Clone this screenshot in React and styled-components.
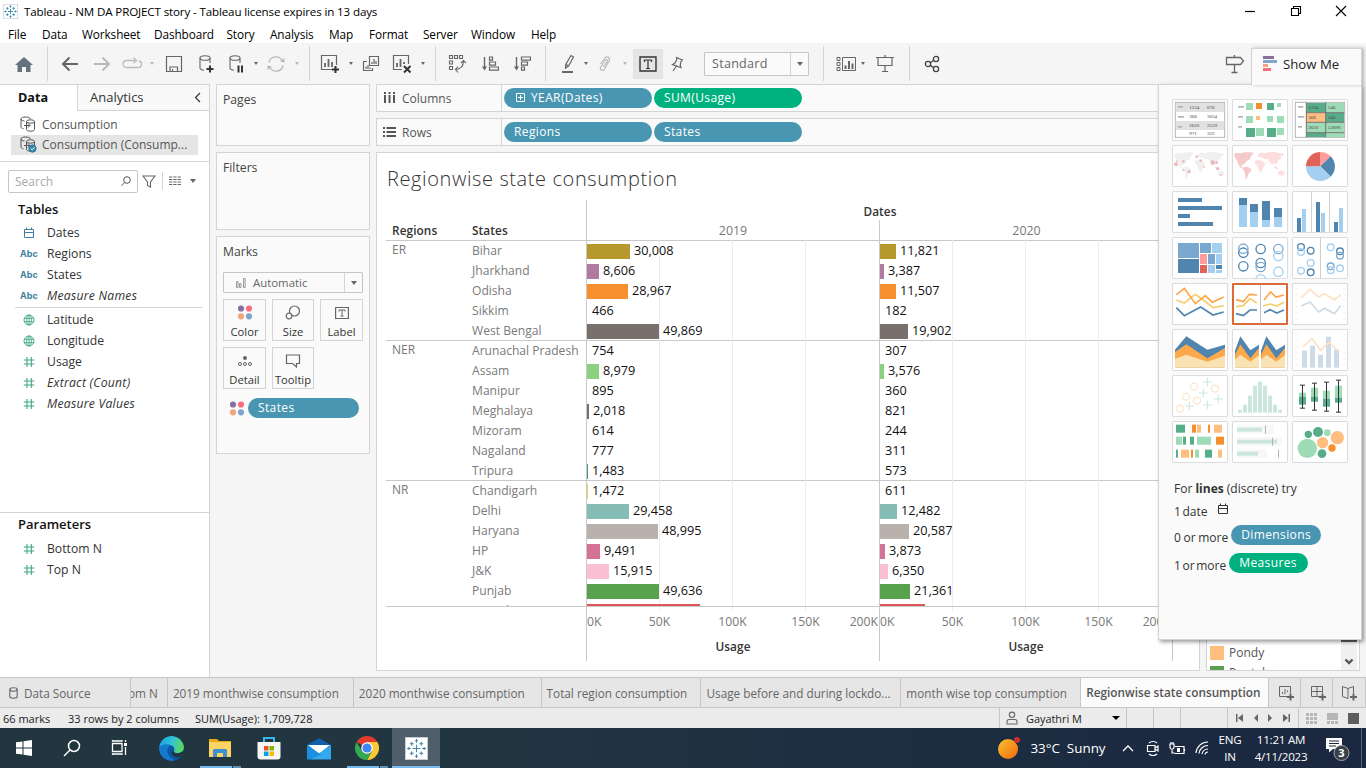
import React from "react";
import styled, { createGlobalStyle, css } from "styled-components";

const UI = '"Open Sans", "Noto Sans", sans-serif';
const BLUE = "#4996b2";
const GREEN = "#00b180";
const LINE = "#d4d4d4";

const GlobalStyle = createGlobalStyle`
  * { box-sizing: border-box; }
  body { margin: 0; overflow: hidden; font-family: ${UI}; font-size: 12px; color: #333; }
  svg { display: block; flex: none; }
`;

/* ---------- window chrome ---------- */
const Window = styled.div`
  position: relative;
  width: 1366px;
  height: 768px;
  display: flex;
  flex-direction: column;
  background: #f5f5f5;
  overflow: hidden;
  white-space: nowrap;
`;
const TitleBar = styled.header`
  height: 22px;
  display: flex;
  align-items: center;
  background: #fff;
  color: #000;
  padding-left: 3px;
  font-size: 11.6px;
  letter-spacing: -0.14px;
`;
const TitleText = styled.span`
  flex: 1;
  margin-left: 6px;
`;
const WindowButtons = styled.div`
  display: flex;
  width: 122px;
  justify-content: space-between;
  padding-right: 19px;
`;
const MenuBar = styled.nav`
  height: 21px;
  display: flex;
  background: #fff;
  color: #000;
  padding-left: 8px;
  font-size: 11.8px;
  line-height: 24px;
`;
const MenuItem = styled.span`
  width: ${(p) => p.$w}px;
  letter-spacing: -0.1px;
`;
const Toolbar = styled.div`
  height: 41px;
  display: flex;
  align-items: center;
  background: #f5f5f5;
  color: #666;
`;
const ToolGroup = styled.div`
  width: ${(p) => p.$w}px;
  height: 35px;
  padding-left: ${(p) => p.$pad || 0}px;
  display: flex;
  align-items: center;
  border-right: ${(p) => (p.$last ? 0 : 1)}px solid ${LINE};
`;
const Tool = styled.span`
  width: ${(p) => p.$w}px;
  height: 30px;
  display: flex;
  align-items: center;
  justify-content: center;
  color: ${(p) => (p.$off ? "#b9b9b9" : "#666")};
  ${(p) => p.$on && css`background: #e4e4e4; color: #333; margin-left: 2px;`}
`;
const Caret = styled.i`
  display: block;
  border: ${(p) => p.$s || 2.5}px solid transparent;
  border-top: ${(p) => (p.$s ? p.$s + 0.5 : 3)}px solid currentColor;
  border-bottom: 0;
`;
const Select = styled.div`
  display: flex;
  align-items: center;
  background: #fafafa;
  border: 1px solid #c6c6c6;
  border-radius: 1px;
  width: ${(p) => p.$w}px;
  height: ${(p) => p.$h}px;
  margin-left: ${(p) => p.$ml || 0}px;
  color: #666;
  & > span { flex: 1; padding-left: 7px; }
  & > b { width: 18px; height: 100%; display: flex; align-items: center; justify-content: center; border-left: 1px solid ${LINE}; }
`;
const StandardText = styled.span`
  font-size: 12.6px;
  letter-spacing: 0.25px;
`;
const ShowMeTab = styled.div`
  align-self: flex-end;
  width: 111px;
  height: 37px;
  margin-right: 4px;
  margin-bottom: -1px;
  padding-left: 11px;
  display: flex;
  align-items: center;
  gap: 6px;
  background: #fafafa;
  border: 1px solid ${LINE};
  border-bottom: 0;
  box-shadow: 2px 0 3px rgba(0, 0, 0, 0.25);
  position: relative;
  z-index: 3;
  color: #222;
  font-size: 13.2px;
  & > span { padding-bottom: 7px; }
  & > svg { margin-bottom: 6px; }
`;

/* ---------- workspace ---------- */
const Workspace = styled.main`
  height: 593px;
  display: flex;
`;
const DataPane = styled.aside`
  width: 210px;
  background: #fff;
  border-right: 1px solid ${LINE};
  border-top: 1px solid ${LINE};
`;
const PaneTabs = styled.div`
  display: flex;
  height: 26px;
  font-size: 13px;
  line-height: 25px;
`;
const DataTab = styled.div`
  width: 77px;
  padding-left: 18px;
  font-size: 12.6px;
  font-weight: 700;
  color: #111;
`;
const AnalyticsTab = styled.div`
  flex: 1;
  display: flex;
  align-items: center;
  justify-content: space-between;
  padding: 0 7px 0 12px;
  background: #f9f9f9;
  border-left: 1px solid ${LINE};
  border-bottom: 1px solid ${LINE};
`;
const Sources = styled.div`
  height: 51px;
  padding: 4px 11px 0;
  border-bottom: 1px solid ${LINE};
`;
const Source = styled.div`
  height: 20px;
  padding: 0 0 1px 9px;
  display: flex;
  align-items: center;
  gap: 5px;
  font-size: 12px;
  color: #555;
  background: ${(p) => (p.$on ? "#e5e5e5" : "none")};
`;
const SearchRow = styled.div`
  display: flex;
  align-items: center;
  padding: 8px 0 0 8px;
  height: 30px;
  margin-bottom: 5px;
  color: #666;
`;
const SearchBox = styled.div`
  width: 130px;
  height: 23px;
  display: flex;
  align-items: center;
  justify-content: space-between;
  padding: 0 6px;
  border: 1px solid #c6c6c6;
  border-radius: 2px;
  font-size: 12px;
  color: #aaa;
  margin-right: 4px;
`;
const ColumnsToggle = styled.div`
  margin-left: 6px;
  padding-left: 6px;
  height: 18px;
  display: flex;
  align-items: center;
  gap: 9px;
  border-left: 1px solid ${LINE};
`;
const PaneHeading = styled.h3`
  margin: 0;
  height: 25px;
  line-height: ${(p) => p.$lh || 24}px;
  padding-left: 18px;
  font-size: 13px;
  font-weight: 600;
  color: #111;
`;
const Field = styled.div`
  height: 21px;
  display: grid;
  grid-template-columns: 18px 1fr;
  column-gap: 9px;
  align-items: center;
  padding-left: 20px;
  font-size: 12.2px;
  font-style: ${(p) => (p.$italic ? "italic" : "normal")};
  letter-spacing: ${(p) => (p.$italic ? 0.25 : 0)}px;
  color: #333;
  & > svg { justify-self: center; }
`;
const Abc = styled.b`
  font: 700 9px "Inter", sans-serif;
  letter-spacing: 0;
  color: #3f7f9c;
`;
const FieldRule = styled.hr`
  margin: 1px 7px 1px 15px;
  border: 0;
  border-top: 1px solid ${LINE};
`;
const Parameters = styled.section`
  margin-top: 98px;
  border-top: 1px solid ${LINE};
`;

const CardColumn = styled.section`
  width: 154px;
  margin-left: 6px;
  display: flex;
  flex-direction: column;
  gap: 6px;
`;
const Card = styled.div`
  height: ${(p) => p.$h}px;
  background: #fafafa;
  border: 1px solid ${LINE};
  padding: 6px 6px 0;
  font-size: 12.2px;
  line-height: 18px;
  color: #444;
`;
const AutoSelect = styled(Select)`
  margin-top: 11px;
  font-size: 11.4px;
  & > svg { margin-left: 12px; }
`;
const MarkGrid = styled.div`
  display: grid;
  grid-template-columns: 43px 42px 43px;
  grid-auto-rows: 42px;
  gap: 6px;
  margin-top: 6px;
`;
const MarkButton = styled.div`
  display: flex;
  flex-direction: column;
  align-items: center;
  border: 1px solid ${LINE};
  padding-top: 5px;
  color: #333;
  font-size: 11.2px;
  & > span { margin-top: 3px; }
  & > svg { color: #666; }
`;
const MarkShelf = styled.div`
  display: flex;
  align-items: center;
  gap: 3px;
  margin-top: 9px;
  padding-left: 6px;
`;
const Pill = styled.span`
  display: flex;
  align-items: center;
  gap: 6px;
  width: ${(p) => p.$w}px;
  height: 20px;
  padding: 0 0 1px ${(p) => p.$pad || 10}px;
  border-radius: 10px;
  background: ${(p) => (p.$measure ? GREEN : BLUE)};
  color: #fff;
  font-size: 12px;
  font-weight: 500;
  letter-spacing: 0.38px;
`;

const Center = styled.section`
  width: 824px;
  margin-left: 6px;
  display: flex;
  flex-direction: column;
  gap: 6px;
`;
const Shelf = styled.div`
  height: 28px;
  display: flex;
  align-items: center;
  gap: 2px;
  background: #fafafa;
  border: 1px solid ${LINE};
`;
const ShelfLabel = styled.div`
  width: 125px;
  height: 100%;
  padding-left: 6px;
  display: flex;
  align-items: center;
  gap: 6px;
  border-right: 1px solid ${LINE};
  color: #555;
  font-size: 12px;
`;
const Sheet = styled.div`
  height: 519px;
  background: #fff;
  border: 1px solid ${LINE};
  padding: 0 0 0 9px;
`;
const SheetTitle = styled.h2`
  margin: 0;
  height: 47px;
  padding: 0 0 0 1px;
  line-height: 51px;
  font-size: 20px;
  font-weight: 300;
  letter-spacing: 0.6px;
  color: #333;
`;

/* ---------- chart ---------- */
const AXIS = "#c9c9c9";
const Cols = styled.div`
  display: grid;
  grid-template-columns: 86px 114px 293px 294px;
  width: 787px;
`;
const ChartHead = styled(Cols)`
  height: 40px;
  grid-template-rows: 20px 20px;
  line-height: 21px;
`;
const HeadLabel = styled.b`
  grid-row: 2;
  grid-column: ${(p) => p.$col};
  padding-left: ${(p) => (p.$col === 1 ? 6 : 0)}px;
  font-weight: 600;
  font-size: 11.8px;
  letter-spacing: 0.1px;
`;
const HeadDates = styled(HeadLabel)`
  grid-row: 1;
  grid-column: 3 / 5;
  text-align: center;
  border-left: 1px solid ${AXIS};
  line-height: 22px;
`;
const Year = styled.span`
  grid-row: 2;
  grid-column: ${(p) => p.$col};
  border-left: 1px solid ${AXIS};
  text-align: center;
  color: #787878;
  font-size: 12.4px;
`;
const Viewport = styled.div`
  height: 366px;
  width: 787px;
  overflow: hidden;
`;
const Region = styled.div`
  display: grid;
  grid-template-columns: 86px 701px;
  box-shadow: inset 0 1px ${AXIS};
`;
const RegionName = styled.span`
  padding-left: 6px;
  line-height: 20px;
  color: #787878;
  font-size: 12px;
`;
const StateRow = styled.div`
  display: grid;
  grid-template-columns: 114px 293px 294px;
  height: 20px;
  line-height: 21px;
  color: #7a7a7a;
  font-size: 12.1px;
`;
const grid = css`
  background-image: linear-gradient(#ededed, #ededed), linear-gradient(#ededed, #ededed), linear-gradient(#ededed, #ededed);
  background-size: 1px 100%;
  background-repeat: no-repeat;
  background-position: 72px 0, 145px 0, 218px 0;
`;
const Plot = styled.div`
  ${grid}
  border-left: 1px solid ${AXIS};
  border-right: ${(p) => (p.$last ? 1 : 0)}px solid ${AXIS};
  display: flex;
  align-items: center;
  gap: 4px;
  color: #111;
  font-size: 12.7px;
`;
const Bar = styled.i`
  height: 15px;
  margin-top: 1px;
  background: ${(p) => p.$c};
`;
const AxisRow = styled(Cols)`
  height: 55px;
  & > i { grid-column: 1 / 3; border-top: 1px solid ${AXIS}; }
`;
const Axis = styled.div`
  border-left: 1px solid ${AXIS};
  border-top: 1px solid ${AXIS};
  border-right: ${(p) => (p.$last ? 1 : 0)}px solid ${AXIS};
  ${grid}
  background-size: 1px 4px;
  text-align: center;
  & > b { display: block; font-weight: 600; font-size: 11.8px; margin-top: 8px; letter-spacing: 0.1px; }
`;
const Ticks = styled.div`
  display: grid;
  grid-template-columns: 36px 73px 73px 73px 36px;
  padding-top: 6px;
  font-size: 12.2px;
  line-height: 17px;
  color: #787878;
  & > :first-child { text-align: left; }
  & > :last-child { justify-self: end; }
`;

const Legend = styled.aside`
  width: 154px;
  height: 587px;
  margin-left: 6px;
  display: flex;
  justify-content: space-between;
  align-items: flex-end;
  background: #fff;
  border: 1px solid ${LINE};
  padding: 0 2px 0 3px;
  overflow: hidden;
`;
const LegendRows = styled.div`
  height: 28px;
  overflow: hidden;
`;
const LegendRow = styled.div`
  height: 20px;
  display: flex;
  align-items: center;
  gap: 5px;
  color: #555;
  font-size: 12px;
  &::before { content: ""; width: 14px; height: 14px; margin-top: 2px; background: ${(p) => p.$c}; }
`;
const LegendScroll = styled.div`
  width: 16px;
  height: 100%;
  display: flex;
  flex-direction: column;
  align-items: center;
  background: #f0f0f0;
  &::before { content: ""; width: 100%; height: 557px; background: #5a5a5a; margin-bottom: 16px; }
`;

/* ---------- show me ---------- */
const ShowMe = styled.aside`
  position: absolute;
  left: 1158px;
  top: 84px;
  width: 204px;
  height: 556px;
  z-index: 2;
  background: #fafafa;
  border: 1px solid ${LINE};
  box-shadow: 2px 2px 4px rgba(0, 0, 0, 0.4);
  padding: 14px 0 0 13px;
  color: #333;
`;
const Thumbs = styled.div`
  display: grid;
  grid-template-columns: repeat(3, 56px);
  grid-auto-rows: 42px;
  gap: 4px;
  margin-bottom: 16px;
`;
const Thumb = styled.div`
  background: #fff;
  border: ${(p) => (p.$on ? "2px solid #dc6a36" : "1px solid #dcdcdc")};
  border-radius: 1px;
  & > svg { margin: ${(p) => (p.$on ? -2 : -1)}px; }
`;
const Hint = styled.div`
  height: ${(p) => p.$h}px;
  padding-left: 2px;
  display: flex;
  align-items: center;
  gap: 3px;
  font-size: 12px;
  word-spacing: ${(p) => p.$ws || 0}px;
  & > svg { margin: 0 0 5px 6px; }
  & > ${Pill} { margin-bottom: 4px; }
`;

/* ---------- bottom bars ---------- */
const Tabs = styled.div`
  height: 31px;
  display: flex;
  background: #e6e6e6;
  border-top: 1px solid #c6c6c6;
  border-bottom: 1px solid #c6c6c6;
  color: #666;
`;
const SheetTab = styled.div`
  width: ${(p) => p.$w}px;
  display: flex;
  align-items: center;
  justify-content: ${(p) => (p.$clip ? "flex-end" : "flex-start")};
  gap: 6px;
  padding: 1px ${(p) => (p.$clip ? 9 : 0)}px 0 ${(p) => p.$pad ?? 5}px;
  border-right: 1px solid #c6c6c6;
  overflow: hidden;
  font-size: 11.75px;
  ${(p) => p.$on && css`background: #fbfbfb; font-weight: 600; font-size: 11.8px; color: #555; padding-bottom: 2px;`}
`;
const StatusBar = styled.footer`
  height: 20px;
  display: flex;
  align-items: center;
  background: #ebebeb;
  padding-left: 3px;
  color: #222;
  font-size: 11px;
`;
const Stat = styled.span`
  width: ${(p) => p.$w}px;
`;
const StatusCell = styled.div`
  width: ${(p) => p.$w}px;
  height: 100%;
  display: flex;
  align-items: center;
  justify-content: space-between;
  padding: 0 ${(p) => p.$pad || 0}px;
  border-left: 1px solid #c6c6c6;
  color: #666;
  & > em { flex: 1; font-style: normal; color: #222; padding-left: 8px; font-size: 10.9px; }
  & > ${Caret} { color: #000; }
`;
const Taskbar = styled.footer`
  height: 40px;
  display: flex;
  background: linear-gradient(90deg, #22363f 0%, #213641 35%, #1c2e41 65%, #1b2740 100%);
  color: #fff;
`;
const TaskItem = styled.div`
  width: ${(p) => p.$w}px;
  display: flex;
  align-items: center;
  justify-content: center;
  ${(p) => p.$on && css`background: #4e5f69; box-shadow: inset 0 -2px #76b9ed;`}
  ${(p) => p.$stack && css`
    background: linear-gradient(#76b9ed, #76b9ed) ${p.$stack}px 100% / 32px 2px no-repeat,
      linear-gradient(#5a8fb8, #5a8fb8) ${p.$stack + 33}px 100% / 8px 2px no-repeat;
  `}
`;
const Tray = styled.div`
  margin-left: auto;
  display: flex;
  align-items: center;
`;
const TrayItem = styled.div`
  width: ${(p) => p.$w}px;
  display: flex;
  align-items: center;
  justify-content: center;
  text-align: center;
  font-size: ${(p) => p.$fs || 13.4}px;
  line-height: 17px;
  letter-spacing: ${(p) => p.$ls || 0}px;
`;
const Notifications = styled(TrayItem)`
  height: 40px;
  margin-right: 4px;
  border-right: 1px solid #5a6576;
  padding-right: 2px;
`;

/* ---------- icons ---------- */
const Svg = ({ w = 18, h = w, vb, children, ...rest }) => (
  <svg width={w} height={h} viewBox={vb || `0 0 ${w} ${h}`} fill="none" stroke="currentColor" {...rest}>{children}</svg>
);
const TableauMark = ({ s, c = "#3f86a8", sw = 1.4 }) => (
  <Svg w={s} vb="0 0 24 24" stroke={c} strokeWidth={sw}>
    <rect x=".5" y=".5" width="23" height="23" fill="#fff" stroke="#c8cdd0" strokeWidth="1" />
    <path d="M12 8v8M8 12h8M12 2v4M10.500 4h3M12 18v4M10.500 20h3M2 12h4M4 10.500v3M18 12h4M20 10.500v3M7 5v4M5 7h4M17 5v4M15 7h4M7 15v4M5 17h4M17 15v4M15 17h4" />
  </Svg>
);
const Cylinder = ({ children }) => (
  <Svg w={18} h={20} strokeWidth="1.1">
    <ellipse cx="8" cy="4" rx="5" ry="2.300" />
    <path d="M3 4v10c0 1.300 2 2 4 2.200M13 4v5" />
    {children}
  </Svg>
);
const Plus = ({ x, y }) => <path d={`M${x - 3.5} ${y}h7M${x} ${y - 3.5}v7`} stroke="#333" strokeWidth="2" />;
const Dots = () => (
  <Svg w={16} h={15} stroke="none">
    <circle cx="4" cy="3.500" r="3.100" fill="#86709b" /><circle cx="12" cy="3.500" r="3.100" fill="#f96d7c" />
    <circle cx="4" cy="11.300" r="3.100" fill="#f2a57c" /><circle cx="12" cy="11.300" r="3.100" fill="#82a5cd" />
  </Svg>
);
const Person = () => <Svg w={12} h={14} strokeWidth="1.100"><circle cx="6" cy="3.800" r="2.700" /><path d="M1 13V11c0-2 1-2.500 2-2.500h6c1 0 2 .5 2 2.500v2z" /></Svg>;
const Calendar = ({ c = "currentColor" }) => (
  <Svg w={12} h={12} stroke={c}><path d="M1.500 2.500h9v8h-9zM1.500 5.500h9M3.500 .5v2.500M8.500 .5v2.500" /></Svg>
);
const Globe = () => (
  <Svg w={12} stroke="#3fa882" strokeWidth=".9"><circle cx="6" cy="6" r="5" /><ellipse cx="6" cy="6" rx="2.300" ry="5" /><path d="M1 4.300h10M1 7.700h10M6 1v10" /></Svg>
);
const Hash = () => <Svg w={12} stroke="#3fa882" strokeWidth="1.100"><path d="M4 1v10M8.300 1v10M.8 4h10.500M.8 8h10.500" /></Svg>;
const DataIcon = ({ on }) => (
  <Svg w={17} h={17} strokeWidth="1">
    <path d="M10.500 3C10 1.500 8 1 5.500 1S1 1.800 1 3v8c0 .8 1 1.500 2.500 1.800M1 3c0 1.300 2 1.900 3.500 2" />
    <ellipse cx="10.500" cy="5.500" rx="4" ry="1.700" /><path d="M6.500 5.500v8c0 .9 1.800 1.700 4 1.700s4-.8 4-1.700v-8M4 9.500h6M8 7.500l2 2-2 2" />
    {on && <><circle cx="12.500" cy="12.500" r="3.700" fill="#3381a3" stroke="#3381a3" /><path d="M10.700 12.500l1.400 1.400 2.400-2.700" stroke="#fff" /></>}
  </Svg>
);
const NavArrow = ({ left }) => <Svg w={18} strokeWidth="2"><path d={left ? "M17 9H2M8.500 2.500L2 9l6.500 6.500" : "M1 9h15M9.500 2.500L16 9l-6.500 6.500"} /></Svg>;
const SheetPlus = () => (
  <Svg w={20} h={20}><path d="M12 15.500H1.500V1.500h15V11" strokeWidth="1.200" /><path d="M5 13V9M8.500 13V5M12 13V8" strokeWidth="1.800" /><Plus x={15.500} y={15.500} /></Svg>
);
const SortIcon = ({ desc }) => (
  <Svg w={18} h={18}>
    <path d="M3.500 2v11" strokeWidth="1.400" /><path d="M1 11.500h5L3.500 15.500z" fill="currentColor" stroke="none" />
    <path d={desc ? "M8.500 2h9v3.200h-9zM8.500 7h6v3.200h-6zM8.500 12h3v3.200h-3z" : "M8.500 2h3v3.200h-3zM8.500 7h6v3.200h-6zM8.500 12h9v3.200h-9z"} strokeWidth="1.200" />
  </Svg>
);

/* ---------- show me thumbnails ---------- */
const R = ({ f, b }) => b.map(([x, y, w, h], i) => <rect key={i} x={x} y={y} width={w} height={h} fill={f} />);
const O = ({ s, c, r = 10, sw = 3 }) => c.map(([x, y], i) => <circle key={i} cx={x} cy={y} r={r} stroke={s} strokeWidth={sw} />);
const L = ({ s, p, w = 3 }) => <polyline points={p} stroke={s} strokeWidth={w} />;
const TableText = ({ rows }) => rows.map(([x, y, t]) => (
  <text key={`${x}-${y}`} x={x} y={y} fontSize="15" fontFamily="Liberation Serif" fill="#444" stroke="none" textLength={t.length * 7.500}>{t}</text>
));
const WorldMap = ({ a, b }) => (
  <g stroke="none">
    <path fill={a} d="M6 28l6-4 12 1 14-3 18 0 10 2-6 6-6 8 2 4-8 4-6 4-4 7-8 3-2 5 8 5-2 2-9-4-7-12-3-10-6-6zM36 66l10-1 12 7-2 8-7 8-5 14h-3l-2-18-5-9z" />
    <path fill={b} d="M76 34l4-8 8-4 10 3 14-4 14-1 14 4 18 3-4 5-8 2 2 7-8 3-4 9-6 6-4-7-5 9-6-10-8-2-9 6 9-3 5-6-5-5-7 2zM68 48l13-4 11 5 8 7-5 9-4 11-6 7-6-10-3-11-7-6zM138 80l11-5 9 8-5 9-14-3zM128 62l12 8-4 3-10-5z" />
  </g>
);
const blueA = "#4f85ae", blueB = "#a5cfef", gA = "#57ad89", gB = "#9edcb8", oA = "#f48f2d", oB = "#ffbd80";
const art = [
  ["96 297 168 126", <>
    <rect x="106" y="307" width="148" height="105" stroke="#b4b4b4" strokeWidth="3" />
    <R f="#e1e1e1" b={[[107, 309, 146, 27], [107, 363, 146, 27]]} />
    <R f="#b4b4b4" b={[[114, 318, 15, 5], [114, 348, 18, 5], [114, 378, 13, 5]]} />
    <TableText rows={[[148, 327, "1234"], [201, 327, "678"], [148, 355, "368"], [201, 355, "3034"], [148, 382, "2620"], [201, 382, "2559"], [148, 406, "971"], [201, 406, "322"]]} />
  </>],
  ["276 297 168 126", <>
    <R f="#b4b4b4" b={[[294, 318, 18, 5], [294, 348, 15, 5], [294, 378, 12, 5]]} />
    <R f={gB} b={[[318, 309, 21, 21], [411, 309, 12, 12], [318, 348, 21, 21], [381, 348, 18, 18], [411, 348, 21, 21], [348, 384, 24, 24], [411, 384, 21, 21]]} />
    <R f={gA} b={[[381, 309, 21, 21], [318, 384, 27, 27], [381, 384, 27, 27]]} />
    <R f={oA} b={[[348, 309, 18, 18]]} /><R f={oB} b={[[348, 348, 12, 12]]} />
  </>],
  ["456 297 168 126", <>
    <rect x="466" y="307" width="148" height="105" stroke="#b4b4b4" strokeWidth="3" />
    <R f="#b4b4b4" b={[[474, 318, 16, 5], [474, 348, 19, 5], [474, 378, 12, 5]]} />
    <R f={gA} b={[[500, 309, 56, 27], [558, 339, 54, 27], [500, 399, 56, 12]]} />
    <R f={gB} b={[[558, 309, 54, 27], [500, 369, 56, 27], [558, 369, 54, 27], [558, 399, 54, 12]]} />
    <R f={oB} b={[[500, 339, 56, 27]]} />
    <path d="M499 307v105M557 307v105M499 338h114M499 367h114M499 398h114" stroke="#6d6d6d" strokeWidth="3" />
    <TableText rows={[[505, 327, "1234"], [564, 327, "546"], [505, 358, "368"], [564, 358, "340"], [505, 388, "2620"], [564, 388, "53890"]]} />
  </>],
  ["0 0 168 126", <><WorldMap a="#f0f0f0" b="#f0f0f0" />
    <g stroke="none" fill="#e8b0b3" opacity=".85"><circle cx="12" cy="58" r="6" /><circle cx="34" cy="49" r="4" /><circle cx="14" cy="49" r="3" /><circle cx="74" cy="35" r="4" /><circle cx="86" cy="47" r="4" /><circle cx="96" cy="65" r="3" /><circle cx="122" cy="53" r="7" /><circle cx="134" cy="53" r="4" /><circle cx="137" cy="71" r="5" /><circle cx="51" cy="80" r="5" /><circle cx="34" cy="75" r="3" /><circle cx="146" cy="90" r="3" /></g></>],
  ["0 0 168 126", <WorldMap a="#f6caca" b="#fddede" />],
  ["456 435 168 126", <g stroke="none">
    <path d="M541 499V456A43 43 0 0 1 572 469z" fill="#ff9d9c" /><path d="M541 499L572 469A43 43 0 0 1 572 530z" fill={blueA} />
    <path d="M541 499L572 530A43 43 0 0 1 498 499z" fill={blueB} /><path d="M541 499H498A43 43 0 0 1 541 456z" fill="#e16257" /></g>],
  ["96 573 168 126", <R f={blueA} b={[[114, 594, 72, 12], [114, 618, 132, 12], [114, 642, 36, 12], [114, 666, 105, 12]]} />],
  ["276 573 168 126", <><R f={blueA} b={[[297, 594, 24, 21], [330, 612, 24, 24], [366, 603, 24, 57], [402, 624, 24, 27]]} /><R f={blueB} b={[[297, 615, 24, 66], [330, 636, 24, 45], [366, 660, 24, 21], [402, 651, 24, 30]]} /></>],
  ["456 573 168 126", <><R f="#d0d0d0" b={[[513, 574, 3, 123], [567, 574, 3, 123]]} /><R f={blueA} b={[[471, 654, 12, 42], [528, 606, 12, 90], [582, 666, 12, 30]]} /><R f={blueB} b={[[486, 627, 12, 69], [543, 639, 12, 57], [597, 624, 12, 72]]} /></>],
  ["36 -9 168 126", <><R f="#7aa9cf" b={[[54, 9, 63, 45], [120, 9, 33, 30], [144, 42, 21, 30]]} /><R f={blueA} b={[[54, 57, 63, 42], [168, 75, 18, 12]]} /><R f={blueB} b={[[156, 9, 30, 30], [168, 42, 18, 30], [144, 75, 21, 24], [168, 90, 18, 9]]} /><R f="#ff9d9c" b={[[120, 42, 21, 30]]} /><R f="#e16257" b={[[120, 75, 21, 24]]} /></>],
  ["216 -9 168 126", <><O r="14" sw={4} s={blueA} c={[[250, 38], [250, 79], [302, 27], [302, 69]]} /><O r="14" sw={4} s="#7aa9cf" c={[[250, 26], [302, 81], [355, 27]]} /><O r="14" sw={4} s={blueB} c={[[355, 48], [355, 95], [302, 118]]} /></>],
  ["396 -9 168 126", <><R f="#d0d0d0" b={[[480, -8, 3, 123]]} /><O sw={4} s={blueA} c={[[423, 21], [452, 32], [452, 97], [540, 34]]} /><O sw={4} s="#7aa9cf" c={[[540, 47], [512, 79]]} /><O sw={4} s={blueB} c={[[423, 36], [452, 69], [423, 92], [512, 22], [512, 91], [540, 85]]} /></>],
  ["36 130 168 126", <><L s="#f5ce6d" p="49,181 73,190 106,164 134,184 159,204 191,198" w="5" /><L s="#ffa347" p="49,165 73,146 106,192 136,168 157,188 191,172" w="5" /><L s={blueA} p="49,204 73,228 122,202 159,226 191,217" w="5" /></>],
  ["216 130 168 126", <><R f="#c4c4c4" b={[[300, 135, 3, 117]]} /><L s="#f5ce6d" p="228,201 250,198 270,177 290,190" w="5" /><L s="#f5ce6d" p="309,199 330,193 350,199 372,188" w="5" /><L s="#ffa347" p="228,180 250,186 268,164 291,166" w="5" /><L s="#ffa347" p="312,181 332,157 348,172 372,166" w="5" /><L s={blueA} p="228,222 250,228 270,211 291,211" w="5" /><L s={blueA} p="312,219 330,210 350,220 372,211" w="5" /></>],
  ["396 130 168 126", <><L s="#fde1c3" p="424,174 450,149 476,172 494,162 523,181 542,165" w="5" /><L s="#cddae7" p="424,199 450,187 476,217 494,206 523,222 542,198" w="5" /><path d="M409 145v92M553 145v92" stroke="#ebebeb" strokeWidth="9" strokeDasharray="2 16" /></>],
  ["36 268 168 126", <g stroke="none"><path fill={blueA} d="M45 330L79 290 142 330 195 315V384H45z" /><path fill="#fca94b" d="M45 337L79 314 142 356 195 325V384H45z" /><path fill="#f9e2b4" d="M45 358L79 345 142 366 195 348V384H45z" /></g>],
  ["216 268 168 126", <g stroke="none">{[0, 78].map((d) => <g key={d} transform={`translate(${d} 0)`}><path fill={blueA} d="M225 333L241 290 271 332 297 315V384H225z" /><path fill="#fca94b" d="M225 345L241 314 271 356 297 325V384H225z" /><path fill="#f9e2b4" d="M225 360L241 345 271 366 297 347V384H225z" /></g>)}</g>],
  ["396 268 168 126", <><R f="#cddae7" b={[[426, 333, 15, 51], [450, 318, 15, 66], [474, 345, 15, 39], [498, 291, 15, 93], [522, 330, 15, 54]]} /><L s="#fde1c3" p="429,322 456,297 482,332 507,308 534,334" w="5" /><path d="M409 283v92M553 283v92" stroke="#ebebeb" strokeWidth="9" strokeDasharray="2 16" /></>],
  ["36 406 168 126", <><O s="#fde1c3" r="11" c={[[102, 441], [78, 471], [111, 483], [60, 507], [165, 447]]} />{[[142, 427], [130, 460], [88, 499], [142, 496], [175, 478]].map(([x, y]) => <path key={x + y} d={`M${x - 13} ${y}h26M${x} ${y - 13}v26`} stroke="#cbe6dc" strokeWidth="3" />)}</>],
  ["216 406 168 126", <R f="#cbe6dc" b={[[234, 510, 12, 9], [249, 495, 12, 24], [264, 468, 12, 51], [279, 438, 12, 81], [294, 426, 12, 93], [309, 438, 12, 81], [324, 468, 12, 51], [339, 495, 12, 24], [354, 510, 12, 9]]} />],
  ["396 406 168 126", <><R f={gB} b={[[417, 459, 21, 12], [453, 444, 21, 27], [489, 453, 21, 24], [525, 438, 21, 36]]} /><R f={gA} b={[[417, 471, 21, 24], [453, 471, 21, 15], [489, 477, 21, 24], [525, 474, 21, 15]]} /><path d="M427.500 436v70M420 436.500h15M420 505.500h15M463.500 431v81M456 430.500h15M456 511.500h15M499.500 428v87M492 427.500h15M492 514.500h15M535.500 422v96M528 421.500h15M528 517.500h15" stroke="#333" strokeWidth="3" /></>],
  ["36 544 168 126", <><R f={gA} b={[[48, 555, 27, 24], [69, 591, 9, 24], [90, 591, 12, 24], [48, 630, 6, 24], [135, 630, 21, 24]]} /><R f={oA} b={[[96, 555, 12, 24], [144, 555, 6, 24], [168, 591, 24, 24], [93, 630, 6, 24]]} /><R f={oB} b={[[111, 555, 12, 24], [162, 555, 24, 24], [63, 630, 24, 24], [174, 630, 12, 24]]} /><R f={gB} b={[[48, 591, 18, 24], [111, 591, 42, 24], [105, 630, 12, 24]]} /></>],
  ["216 544 168 126", <><R f="#f7f7f7" b={[[231, 557, 110, 26], [231, 593, 135, 26], [231, 629, 90, 26]]} /><R f="#cbe6dc" b={[[231, 564, 75, 12], [231, 600, 120, 12], [231, 636, 63, 12]]} /><R f="#b4b4b4" b={[[315, 558, 3, 24], [336, 594, 3, 24], [354, 630, 3, 24]]} /></>],
  ["396 544 168 126", <g stroke="none"><circle cx="442" cy="626" r="29" fill={gB} /><circle cx="445" cy="584" r="11" fill={gA} /><circle cx="474" cy="577" r="15" fill={gA} /><circle cx="502" cy="579" r="10" fill={gB} /><circle cx="532" cy="594" r="20" fill={oB} /><circle cx="488" cy="609" r="17" fill={oB} /><circle cx="516" cy="625" r="11" fill={oA} /><circle cx="486" cy="642" r="13" fill={gA} /></g>],
];

/* ---------- data ---------- */
const menus = [["File", 34], ["Data", 40], ["Worksheet", 72], ["Dashboard", 72.500], ["Story", 43.500], ["Analysis", 59], ["Map", 40], ["Format", 54], ["Server", 48], ["Window", 60], ["Help", 40]];
const regions = [
  ["ER", [["Bihar", "#b6992d", 30008, 11821], ["Jharkhand", "#b07aa1", 8606, 3387], ["Odisha", "#f5902c", 28967, 11507], ["Sikkim", "#d7b5a6", 466, 182], ["West Bengal", "#79706e", 49869, 19902]]],
  ["NER", [["Arunachal Pradesh", "#a0cbe8", 754, 307], ["Assam", "#8cd17d", 8979, 3576], ["Manipur", "#d4a6c8", 895, 360], ["Meghalaya", "#79706e", 2018, 821], ["Mizoram", "#fabfd2", 614, 244], ["Nagaland", "#d7b5a6", 777, 311], ["Tripura", "#499894", 1483, 573]]],
  ["NR", [["Chandigarh", "#f1ce63", 1472, 611], ["Delhi", "#86bcb6", 29458, 12482], ["Haryana", "#bab0ac", 48995, 20587], ["HP", "#d37295", 9491, 3873], ["J&K", "#fabfd2", 15915, 6350], ["Punjab", "#59a14f", 49636, 21361], ["Rajasthan", "#e15759", 77800, 31200, true]]],
];
const barWidth = (v) => Math.max(1, Math.floor((v * 292.8) / 200000 - 0.45));
const Value = ({ v, c, last, cut }) => (
  <Plot $last={last}>
    <Bar $c={v < 1000 ? "transparent" : c} style={{ width: barWidth(v) }} />
    {!cut && <span>{v.toLocaleString("en-US")}</span>}
  </Plot>
);
const fields = [["cal", "Dates"], ["abc", "Regions"], ["abc", "States"], ["abc", "Measure Names", 1], null, ["globe", "Latitude"], ["globe", "Longitude"], ["hash", "Usage"], ["hash", "Extract (Count)", 1], ["hash", "Measure Values", 1]];
const fieldIcon = { cal: <Calendar c="#3f7f9c" />, abc: <Abc>Abc</Abc>, globe: <Globe />, hash: <Hash /> };
const sheetTabs = [["2019 monthwise consumption", 186], ["2020 monthwise consumption", 188], ["Total region consumption", 160], ["Usage before and during lockdo...", 200], ["month wise top consumption", 180]];

const AxisPane = ({ last }) => (
  <Axis $last={last}>
    <Ticks><span>0K</span><span>50K</span><span>100K</span><span>150K</span><span>200K</span></Ticks>
    <b>Usage</b>
  </Axis>
);

const ToolbarRow = () => (
  <Toolbar>
    <ToolGroup $w={48}><Tool $w={47}><Svg w={18} h={18} stroke="none"><path fill="#66727f" d="M9 2l9 8h-2.500v7H11v-5H7v5H2.500v-7H0z" /></Svg></Tool></ToolGroup>
    <ToolGroup $w={262} $pad={6}>
      <Tool $w={32}><NavArrow left /></Tool>
      <Tool $w={32} $off><NavArrow /></Tool>
      <Tool $w={28} $off><Svg w={20} h={14} strokeWidth="1.300"><path d="M13 3.500H4.500a3.200 3.200 0 0 0 0 7H15.500a3.200 3.200 0 0 0 1.500-6.500M11.500 .8l3 2.700-3 2.700" /></Svg></Tool>
      <Tool $w={12} $off><Caret /></Tool>
      <Tool $w={32}><Svg w={18}><path d="M1.500 1.500h15v15h-15zM5 16.500V12h7.500v4.500M7.500 14v2.500" strokeWidth="1.200" /></Svg></Tool>
      <Tool $w={32}><Cylinder><Plus x={13} y={15} /></Cylinder></Tool>
      <Tool $w={28}><Cylinder><path d="M11.500 11.500v7M15 11.500v7" stroke="#333" strokeWidth="2" /></Cylinder></Tool>
      <Tool $w={12}><Caret /></Tool>
      <Tool $w={28} $off><Svg w={18}><path d="M2 7.500a7 7 0 0 1 13-2M16 10.500a7 7 0 0 1-13 2" strokeWidth="1.300" /><path d="M17.500 3v4.500l-4.500-1zM.5 15v-4.500l4.500 1z" fill="currentColor" stroke="none" /></Svg></Tool>
      <Tool $w={13} $off><Caret /></Tool>
    </ToolGroup>
    <ToolGroup $w={126} $pad={5}>
      <Tool $w={30}><SheetPlus /></Tool>
      <Tool $w={11}><Caret /></Tool>
      <Tool $w={30}><Svg w={18}><path d="M7.500 1.500h9v9h-9zM5 6.500H1.500v9h9V13" strokeWidth="1.200" /><path d="M10 9V7M12 9V4M14 9V6M4 14v-2.500M6 14v-4M8 14v-1.500" strokeWidth="1.200" /></Svg></Tool>
      <Tool $w={32}><Svg w={20} h={20}><path d="M10 15.500H1.500V1.500h15V10" strokeWidth="1.200" /><path d="M5 13V9M8.500 13V5M12 10V8" strokeWidth="1.800" /><path d="M12 12l6.500 6.500M18.500 12L12 18.500" stroke="#333" strokeWidth="2" /></Svg></Tool>
      <Tool $w={9}><Caret /></Tool>
    </ToolGroup>
    <ToolGroup $w={110} $pad={5}>
      <Tool $w={32}><Svg w={18} h={19} strokeWidth="1.100"><path d="M1.500 1.500h3v3h-3zM6.500 1.500h3v3h-3zM11.500 1.500h3v3h-3zM1.500 7h3v3h-3zM1.500 12.500h3v3h-3zM15.500 7c0 5-2 8-8 8.500M13 9l2.500-2.500L18 9M10 12.500L7.500 15.500l2.500 3" /></Svg></Tool>
      <Tool $w={33}><SortIcon /></Tool>
      <Tool $w={32}><SortIcon desc /></Tool>
    </ToolGroup>
    <ToolGroup $w={278} $pad={10}>
      <Tool $w={24}><Svg w={14} h={20}><path d="M10 1.500l2.500 1.500-5 9-3 2 .2-3.500zM5 10.500l2.500 1.500" strokeWidth="1.200" /><path d="M1 18h11" strokeWidth="2" /></Svg></Tool>
      <Tool $w={11}><Caret /></Tool>
      <Tool $w={28} $off><Svg w={14} h={18} strokeWidth="1.200"><path d="M2.500 9L7 3c1.500-2 5-1 4.500 2L6.500 14c-1.500 2.500-5 1-4-1.500L7 5.500c1-1.500 3-.5 2.300 1L5.500 12" /></Svg></Tool>
      <Tool $w={12} $off><Caret /></Tool>
      <Tool $w={30} $on><Svg w={18} h={16}><path d="M1 1h16v14H1z" strokeWidth="1.400" /><path d="M5.500 6V4h7v2M9 4v8.500M7 12.500h4" strokeWidth="1.200" /></Svg></Tool>
      <Tool $w={28}><Svg w={14} h={16} strokeWidth="1.200"><path d="M6.500 1.500l6 2.500-1.500 1.500-.8 3.500 .8 2.500-8.500-3 2.500-1.500 1.800-3.500zM6.500 10L3 15" /></Svg></Tool>
      <Select $w={105} $h={24} $ml={13}><StandardText>Standard</StandardText><b><Caret $s={3.5} /></b></Select>
    </ToolGroup>
    <ToolGroup $w={86} $pad={10}>
      <Tool $w={24}><Svg w={20} h={16}><path d="M1 1.500h3v3H1zM1 6.500h3v3H1zM1 11.500h3v3H1zM6.500 1.500h13v13h-13z" /><path d="M9.500 13V9.500M13 13V5M16.500 13V7.500" strokeWidth="2" /></Svg></Tool>
      <Tool $w={10}><Caret /></Tool>
      <Tool $w={34}><Svg w={18} h={18} strokeWidth="1.200"><path d="M0 2.500h18M2 2.500v8h14v-8M9 0v2.500M9 10.500V16M6 16.500h6" /></Svg></Tool>
    </ToolGroup>
    <ToolGroup $w={309} $pad={6} $last><Tool $w={32}><Svg w={16} h={18} stroke="#444" strokeWidth="1.300"><circle cx="4" cy="9" r="2.600" /><circle cx="12" cy="4" r="2.600" /><circle cx="12" cy="14" r="2.600" /><path d="M6.300 7.700l3.500-2.400M6.300 10.400l3.500 2.300" /></Svg></Tool></ToolGroup>
    <Tool $w={32}><Svg w={20} h={20}><path d="M1.500 3.500h14l3 3.500-3 3.500h-14zM9.500 1v2.500M9.500 10.500V18M6.500 18.500h6" strokeWidth="1.300" /></Svg></Tool>
    <ShowMeTab>
      <Svg w={14} h={16} stroke="none"><path fill="#86709b" d="M0 0h11v3H0z" /><path fill="#82a5cd" d="M0 4h14v3H0z" /><path fill="#f2a57c" d="M0 8h5v3H0z" /><path fill="#f96d7c" d="M0 12h8v3H0z" /></Svg>
      <span>Show Me</span>
    </ShowMeTab>
  </Toolbar>
);

const LeftPane = () => (
  <DataPane>
    <PaneTabs>
      <DataTab>Data</DataTab>
      <AnalyticsTab>Analytics<Svg w={8} h={11} strokeWidth="1.200"><path d="M6 1L1.500 5.500 6 10" /></Svg></AnalyticsTab>
    </PaneTabs>
    <Sources>
      <Source><DataIcon />Consumption</Source>
      <Source $on><DataIcon on />Consumption (Consump...</Source>
    </Sources>
    <SearchRow>
      <SearchBox>Search<Svg w={10} h={10} stroke="#555"><circle cx="6" cy="4" r="3.300" /><path d="M3.700 6.500L.5 9.700" /></Svg></SearchBox>
      <Svg w={14} h={13} strokeWidth="1.100"><path d="M1 1h12L8.500 7v5L5.500 10.500V7z" /></Svg>
      <ColumnsToggle>
        <Svg w={12} h={11}><path d="M0 1h12M0 3.500h12M0 6h12M0 8.500h12" strokeDasharray="3.300 1" strokeWidth="1.200" /></Svg>
        <Caret $s={3.5} />
      </ColumnsToggle>
    </SearchRow>
    <PaneHeading>Tables</PaneHeading>
    <div>
      {fields.map((f, i) => f ? <Field key={i} $italic={f[2]}>{fieldIcon[f[0]]}<span>{f[1]}</span></Field> : <FieldRule key={i} />)}
    </div>
    <Parameters>
      <PaneHeading $lh={22}>Parameters</PaneHeading>
      <Field><Hash /><span>Bottom N</span></Field>
      <Field><Hash /><span>Top N</span></Field>
    </Parameters>
  </DataPane>
);

const Cards = () => (
  <CardColumn>
    <Card $h={62}>Pages</Card>
    <Card $h={78}>Filters</Card>
    <Card $h={218}>
      Marks
      <AutoSelect $w={140} $h={21}>
        <Svg w={10} h={10} strokeWidth="1" stroke="#999"><path d="M.5 3.500h1.500v6H.5zM3.500 5.500H5v4H3.500zM7.500 .5h1.700v9H7.500z" /></Svg>
        <span>Automatic</span><b><Caret $s={3.5} /></b>
      </AutoSelect>
      <MarkGrid>
        <MarkButton><Dots /><span>Color</span></MarkButton>
        <MarkButton><Svg w={16} h={15} strokeWidth="1.200"><circle cx="9.500" cy="6" r="5" /><circle cx="4" cy="11" r="2.800" fill="#fafafa" /></Svg><span>Size</span></MarkButton>
        <MarkButton><Svg w={14} h={15}><path d="M.6 2.500h12.800v11H.6z" strokeWidth="1.200" /><path d="M4 6.500V5h6v1.500M7 5v6M5.500 11h3" /></Svg><span>Label</span></MarkButton>
        <MarkButton><Svg w={16} h={15}><circle cx="8" cy="5" r="2" fill="currentColor" stroke="none" /><circle cx="3" cy="11" r="1.500" /><circle cx="8" cy="11" r="1.500" /><circle cx="13" cy="11" r="1.500" /></Svg><span>Detail</span></MarkButton>
        <MarkButton><Svg w={16} h={15} strokeWidth="1.200"><path d="M1.500 2h13v8.500h-3v3.500l-4-3.500h-6z" /></Svg><span>Tooltip</span></MarkButton>
      </MarkGrid>
      <MarkShelf><Dots /><Pill $w={111}>States</Pill></MarkShelf>
    </Card>
  </CardColumn>
);

const ChartSheet = () => (
  <Sheet>
    <SheetTitle>Regionwise state consumption</SheetTitle>
    <ChartHead>
      <HeadDates>Dates</HeadDates>
      <HeadLabel $col={1}>Regions</HeadLabel>
      <HeadLabel $col={2}>States</HeadLabel>
      <Year $col={3}>2019</Year>
      <Year $col={4}>2020</Year>
    </ChartHead>
    <Viewport>
      {regions.map(([name, states]) => (
        <Region key={name}>
          <RegionName>{name}</RegionName>
          <div>
            {states.map(([s, c, a, b, cut]) => (
              <StateRow key={s}><span>{s}</span><Value v={a} c={c} cut={cut} /><Value v={b} c={c} cut={cut} last /></StateRow>
            ))}
          </div>
        </Region>
      ))}
    </Viewport>
    <AxisRow><i /><AxisPane /><AxisPane last /></AxisRow>
  </Sheet>
);

const ShowMePanel = () => (
  <ShowMe>
    <Thumbs>
      {art.map(([vb, el], i) => <Thumb key={i} $on={i === 13}><Svg w={56} h={42} vb={vb} stroke="none">{el}</Svg></Thumb>)}
    </Thumbs>
    <Hint $h={18}><span>For <b>lines</b> (discrete) try</span></Hint>
    <Hint $h={29} $ws={-1.5}>1 date<Calendar /></Hint>
    <Hint $h={22} $ws={-0.5}>0 or more<Pill $w={90}>Dimensions</Pill></Hint>
    <Hint $h={34} $ws={-1.5}>1 or more<Pill $w={79} $measure>Measures</Pill></Hint>
  </ShowMe>
);

const BottomBars = () => (
  <>
    <Tabs>
      <SheetTab $w={131} $pad={9}><Svg w={9} h={12} strokeWidth="1.100"><ellipse cx="4.500" cy="2.500" rx="3.700" ry="1.700" /><path d="M.8 2.500v7c0 1 1.500 1.700 3.700 1.700s3.700-.7 3.700-1.700v-7" /></Svg>Data Source</SheetTab>
      <SheetTab $w={37} $clip $pad={0}>Bottom N</SheetTab>
      {sheetTabs.map(([t, w]) => <SheetTab key={t} $w={w}>{t}</SheetTab>)}
      <SheetTab $w={188} $on>Regionwise state consumption</SheetTab>
      <SheetTab $w={32} $pad={9}><Svg w={16} h={16}><path d="M9 11.500H1.500V1.500h11V8M4.500 9V7M7 9V4M9.500 7V5.500" /><path d="M12.500 8.500v7M9 12h7" strokeWidth="2" /></Svg></SheetTab>
      <SheetTab $w={32} $pad={9}><Svg w={16} h={16}><path d="M9 11.500H1.500V1.500h11V8M7 1.500v10M1.500 6.500h11" /><path d="M12.500 8.500v7M9 12h7" strokeWidth="2" /></Svg></SheetTab>
      <SheetTab $w={33} $pad={8}><Svg w={17} h={16}><path d="M7 3.500L1.500 1.500v10l5.500 2V3.500l5.500-2V8" /><path d="M12.500 8.500v7M9 12h7" strokeWidth="2" /></Svg></SheetTab>
    </Tabs>
    <StatusBar>
      <Stat $w={65}>66 marks</Stat><Stat $w={127}>33 rows by 2 columns</Stat><Stat $w={804}>SUM(Usage): 1,709,728</Stat>
      <StatusCell $w={127} $pad={6}><Person /><em>Gayathri M</em><Caret $s={4} /></StatusCell>
      <StatusCell $w={27} /><StatusCell $w={27} /><StatusCell $w={47} />
      <StatusCell $w={71} $pad={8}>
        <Svg w={8} h={8} fill="currentColor" stroke="none"><path d="M0 0h1.500v8H0zM7 0v8L2 4z" /></Svg>
        <Svg w={6} h={8} fill="currentColor" stroke="none"><path d="M5 0v8L1 4z" /></Svg>
        <Svg w={6} h={8} fill="currentColor" stroke="none"><path d="M1 0v8l4-4z" /></Svg>
        <Svg w={8} h={8} fill="currentColor" stroke="none"><path d="M6.500 0H8v8H6.500zM1 0v8l5-4z" /></Svg>
      </StatusCell>
      <StatusCell $w={68} $pad={7}>
        <Svg w={11} h={11} stroke="#b6b6b6" strokeWidth="3" strokeDasharray="3 1"><path d="M0 1.500h11M0 5.500h11M0 9.500h11" /></Svg>
        <Svg w={11} h={11} stroke="#b6b6b6"><path d="M0 3.500h11" strokeWidth="7" /><path d="M0 9.500h11" strokeWidth="3" strokeDasharray="3 1" /></Svg>
        <Svg w={11} h={11} fill="#5e5e5e" stroke="none"><path d="M0 0h11v11H0z" /></Svg>
      </StatusCell>
    </StatusBar>
    <Taskbar>
      <TaskItem $w={48}><Svg w={16} h={16} fill="#fff" stroke="none"><path d="M0 2.300L6.500 1.400v6.100H0zM7.500 1.200L16 0v7.500H7.500zM0 8.500h6.500v6.100L0 13.700zM7.500 8.500H16V16l-8.500-1.200z" /></Svg></TaskItem>
      <TaskItem $w={48}><Svg w={18} h={18} strokeWidth="1.500"><circle cx="11" cy="7" r="5.500" /><path d="M7 11L1 17" /></Svg></TaskItem>
      <TaskItem $w={48}><Svg w={18} h={18} strokeWidth="1.300"><path d="M1.500 4.500h9.500v8H1.500zM1.500 1v1h9.500V1M1.500 16v-1h9.500v1M14.500 1v2M14.500 8v8" /><path d="M13 4h3v3h-3z" fill="#fff" stroke="none" /></Svg></TaskItem>
      <TaskItem $w={54}><Svg w={25} h={25} vb="0 0 24 24" stroke="none">
        <defs>
          <linearGradient id="edgeTop" x1="0" y1=".3" x2="1" y2=".5"><stop offset="0" stopColor="#1b9de2" /><stop offset=".5" stopColor="#2fc4d8" /><stop offset="1" stopColor="#62d957" /></linearGradient>
          <clipPath id="edgeDisc"><circle cx="12" cy="12" r="12" /></clipPath>
        </defs>
        <g clipPath="url(#edgeDisc)">
          <circle cx="12" cy="12" r="12" fill="#1578cf" />
          <path fill="url(#edgeTop)" d="M0 11C1 4 6 0 12 0c7 0 12 5 12 10 0 4-3 6.500-6.500 6.500-3 0-4-1.200-3-2.500 1-1.200.8-3.500-2.500-5C8 7 3 7.500 0 11z" />
          <path fill="#0b57a4" d="M8 14c0-3 2-5 4-5 1.500.8 3 2.500 2.300 4.500-.8 1.500.5 3 3.200 3 2 0 3.500-.5 4.700-1.300L24 20l-6 4C11 23 8 18 8 14z" />
          <path fill="#22363f" d="M14.300 13.800c-.8 1.500.5 2.900 3.200 2.900 2.500 0 4.800-1 6.500-3v5l-2.500 1.300c-3 1-9 .5-9.500-3.500 0-1.300 1-2.500 2.300-2.700z" />
        </g>
      </Svg></TaskItem>
      <TaskItem $w={44} $stack={2}><Svg w={22} h={20} stroke="none"><path fill="#e8a912" d="M0 1h8l2 2h12v5H0z" /><path fill="#fbd463" d="M0 4h22v15H0z" /><path fill="#3c8fd3" d="M4 19v-6.500c0-1 .7-1.500 1.500-1.500h11c.8 0 1.500.5 1.500 1.500V19h-4v-4H8v4z" /></Svg></TaskItem>
      <TaskItem $w={53}><Svg w={24} h={24} stroke="none"><path d="M7 7V2h10v5" stroke="#38b7ef" strokeWidth="2" /><path fill="#f6f6f6" d="M.5 6h23v14.500c0 2-1 3-3 3h-17c-2 0-3-1-3-3z" /><path fill="#f25022" d="M7 10h4.500v4.500H7z" /><path fill="#7fba00" d="M12.500 10H17v4.500h-4.500z" /><path fill="#00a4ef" d="M7 15.500h4.500V20H7z" /><path fill="#ffb900" d="M12.500 15.500H17V20h-4.500z" /></Svg></TaskItem>
      <TaskItem $w={47}><Svg w={24} h={23} stroke="none"><path fill="#0f60ac" d="M0 8l12-7 12 7v4H0z" /><path fill="#fff" d="M1 8h22l-11 9z" /><path fill="#34a8ec" d="M24 8v14.500H3L12 16.500z" /><path fill="#1d8fe0" d="M0 8l14 9.500-11 5H0z" /></Svg></TaskItem>
      <TaskItem $w={50} $stack={5}><Svg w={24} h={24} stroke="none"><path fill="#e33b2e" d="M12 12L1.600 6A12 12 0 0 1 22.400 6z" /><path fill="#fcc934" d="M12 6h10.400A12 12 0 0 1 12 24l5-9z" /><path fill="#34a853" d="M12 24A12 12 0 0 1 1.600 6L7 15l5 2.500 5-2.500z" /><circle cx="12" cy="12" r="5.800" fill="#fff" /><circle cx="12" cy="12" r="4.600" fill="#4285f4" /></Svg></TaskItem>
      <TaskItem $w={48} $on><TableauMark s={23} sw={1.1} /></TaskItem>
      <Tray>
        <TrayItem $w={26}><Svg w={24} h={24} stroke="none"><defs><linearGradient id="sun" x1="0" y1="0" x2="1" y2="1"><stop offset="0" stopColor="#f9c22e" /><stop offset="1" stopColor="#f0690f" /></linearGradient></defs><circle cx="11" cy="13" r="10" fill="url(#sun)" /><circle cx="20" cy="4" r="3" fill="#c9302c" /></Svg></TrayItem>
        <TrayItem $w={92}>33°C&nbsp; Sunny</TrayItem>
        <TrayItem $w={28}><Svg w={12} h={8} strokeWidth="1.300"><path d="M1 7l5-5 5 5" /></Svg></TrayItem>
        <TrayItem $w={22}><Svg w={14} h={16} strokeWidth="1.200"><path d="M1.500 5.500h7.500v6H1.500zM9 8l3-2v5l-3-2M3 3c2-2 6-2 8 0M3 14c2 2 6 2 8 0" /></Svg></TrayItem>
        <TrayItem $w={27}><Svg w={17} h={13} strokeWidth="1.200"><path d="M6 4.500h9v7H6M15.500 7v2M1 2v3c0 3 4 3 4 0V2zM2 0v2M4 0v2M3 8v3h3" /><path d="M8 6h3v4H8z" fill="#fff" stroke="none" /></Svg></TrayItem>
        <TrayItem $w={22}><Svg w={14} h={14} strokeWidth="1.200"><path d="M1 12A12 12 0 0 1 13 1M4 12.500A9 9 0 0 1 13 4.500M7 13a6 6 0 0 1 6-5M10 13.500a3 3 0 0 1 3-2.500" /></Svg></TrayItem>
        <TrayItem $w={34} $fs={11.6} $ls={-0.2}>ENG<br />IN</TrayItem>
        <TrayItem $w={68} $fs={11.6} $ls={-0.25}>11:21 AM<br />4/11/2023</TrayItem>
        <Notifications $w={47}><Svg w={25} h={26} stroke="none"><path fill="#fff" d="M1 3h16v11H8l-4 3.500V14H1z" /><path d="M4 6h10M4 8.500h10M4 11h7" stroke="#1b2740" /><circle cx="16.500" cy="18" r="7.500" fill="#3a3f46" stroke="#a0a4aa" /><text x="16.500" y="22" fontSize="11" fontWeight="700" textAnchor="middle" fill="#fff">3</text></Svg></Notifications>
      </Tray>
    </Taskbar>
  </>
);

export default function App() {
  return (
    <Window>
      <GlobalStyle />
      <TitleBar>
        <TableauMark s={15} c="#2f86b0" />
        <TitleText>Tableau - NM DA PROJECT story - Tableau license expires in 13 days</TitleText>
        <WindowButtons>
          <Svg w={12}><path d="M1 6.500h10" strokeWidth="1.200" /></Svg>
          <Svg w={12}><path d="M1.500 3.500h7v7h-7zM3.500 3.500v-2h7v7h-2" strokeWidth="1.100" /></Svg>
          <Svg w={12}><path d="M1 1l10 10M11 1L1 11" strokeWidth="1.100" /></Svg>
        </WindowButtons>
      </TitleBar>
      <MenuBar>{menus.map(([m, w]) => <MenuItem key={m} $w={w}>{m}</MenuItem>)}</MenuBar>
      <ToolbarRow />
      <Workspace>
        <LeftPane />
        <Cards />
        <Center>
          <Shelf>
            <ShelfLabel><Svg w={13} h={12} strokeWidth="2"><path d="M2 0v2M2 3v8M6.500 0v2M6.500 3v8M11 0v2M11 3v8" /></Svg>Columns</ShelfLabel>
            <Pill $w={148} $pad={12}><Svg w={9} h={9}><path d="M.5 .5h8v8h-8zM2 4.500h5M4.500 2v5" /></Svg>YEAR(Dates)</Pill>
            <Pill $w={148} $measure>SUM(Usage)</Pill>
          </Shelf>
          <Shelf>
            <ShelfLabel><Svg w={13} h={12} strokeWidth="2"><path d="M0 2h2M3.500 2h9.500M0 6h2M3.500 6h9.500M0 10h2M3.500 10h9.500" /></Svg>Rows</ShelfLabel>
            <Pill $w={148}>Regions</Pill>
            <Pill $w={148}>States</Pill>
          </Shelf>
          <ChartSheet />
        </Center>
        <Legend>
          <LegendRows><LegendRow $c="#ffbe7d">Pondy</LegendRow><LegendRow $c="#59a14f">Puntab</LegendRow></LegendRows>
          <LegendScroll><Svg w={10} h={8} strokeWidth="2.400" stroke="#555"><path d="M1.500 1.500L5 5l3.500-3.500" /></Svg></LegendScroll>
        </Legend>
      </Workspace>
      <BottomBars />
      <ShowMePanel />
    </Window>
  );
}
